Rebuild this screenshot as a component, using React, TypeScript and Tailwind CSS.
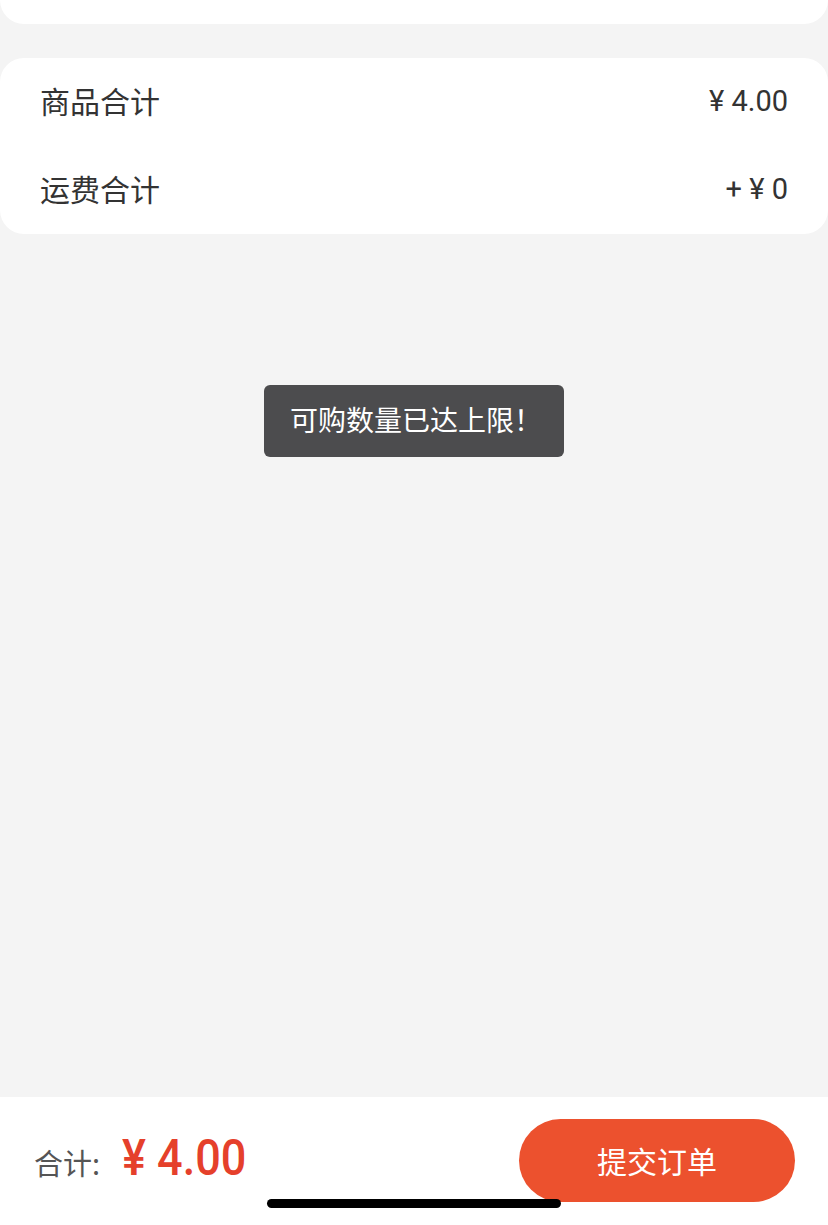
import React from "react";

export default function App() {
  const font = { fontFamily: '"Noto Sans CJK SC", "Noto Sans", sans-serif' };
  const num = { fontFamily: '"Roboto", "Noto Sans CJK SC", sans-serif' };
  return (
    <div className="relative flex h-[1225px] w-[828px] flex-col overflow-hidden bg-[#f4f4f4]" style={font}>
      <div className="h-[24px] w-full rounded-b-[24px] bg-white" />
      <div className="mt-[34px] flex flex-col rounded-[24px] bg-white px-[40px]">
        <div className="flex h-[88px] items-center justify-between pb-[3px] text-[30px] text-[#333]">
          <span>商品合计</span>
          <span className="pt-[2px] text-[29px]" style={num}>¥ 4.00</span>
        </div>
        <div className="flex h-[88px] items-center justify-between pb-[3px] text-[30px] text-[#333]">
          <span>运费合计</span>
          <span className="pt-[2px] text-[29px]" style={num}>+ ¥ 0</span>
        </div>
      </div>
      <div className="flex-1" />
      <div className="relative flex h-[128px] items-center justify-between bg-white pl-[34px] pr-[33px]">
        <div className="mb-[5px] flex items-baseline">
          <span className="text-[29px] text-[#555]">合计:</span>
          <span
            className="ml-[22px] origin-left scale-x-[0.9] text-[50px] font-medium leading-none text-[#e5402b]"
            style={{ fontFamily: '"Roboto", sans-serif' }}
          >
            ¥ 4.00
          </span>
        </div>
        <button className="mb-[2px] flex h-[83px] w-[276px] items-center justify-center rounded-full bg-[#ec512e] text-[30px] text-white">
          提交订单
        </button>
        <div className="absolute bottom-[17px] left-[267px] h-[9px] w-[294px] rounded-full bg-black" />
      </div>
      <div className="absolute left-[264px] top-[385px] flex h-[72px] w-[300px] items-center rounded-[6px] bg-[#4c4c4e] pb-[4px] pl-[26px] text-[28px] text-white">
        可购数量已达上限！
      </div>
    </div>
  );
}
